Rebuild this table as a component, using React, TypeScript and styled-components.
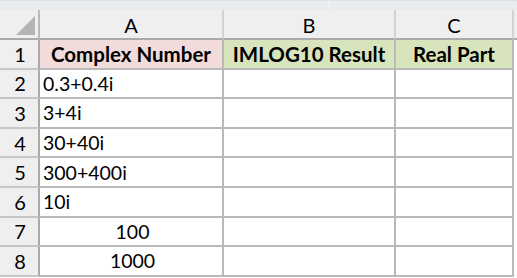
import { Fragment } from "react";
import styled, { createGlobalStyle } from "styled-components";

const GlobalStyle = createGlobalStyle`
  html, body {
    margin: 0;
    padding: 0;
    background: #ffffff;
  }
  body {
    font-family: "Lato", "Liberation Sans", sans-serif;
    color: #000000;
    overflow: hidden;
  }
`;

type Row = { value: string; center?: boolean };

const rows: Row[] = [
  { value: "0.3+0.4i" },
  { value: "3+4i" },
  { value: "30+40i" },
  { value: "300+400i" },
  { value: "10i" },
  { value: "100", center: true },
  { value: "1000", center: true },
];

const App = () => {
  return (
    <Page>
      <GlobalStyle />
      <TopStrip>
        <StripTab />
      </TopStrip>
      <Sheet>
        <Corner>
          <CornerTriangle />
        </Corner>
        <ColHead>A</ColHead>
        <ColHead>B</ColHead>
        <ColHead>C</ColHead>
        <ColHead $last />

        <RowHead>1</RowHead>
        <TitleCell $bg="#f2dcdb">Complex Number</TitleCell>
        <TitleCell $bg="#d8e4bc">IMLOG10 Result</TitleCell>
        <TitleCell $bg="#d8e4bc">Real Part</TitleCell>
        <Filler />

        {rows.map((r, i) => (
          <Fragment key={i}>
            <RowHead>{i + 2}</RowHead>
            <Cell $center={r.center}>{r.value}</Cell>
            <Cell />
            <Cell />
            <Filler />
          </Fragment>
        ))}
      </Sheet>
    </Page>
  );
};

const Page = styled.div`
  width: 517px;
  height: 278px;
  overflow: hidden;
  background: #ffffff;
`;

const TopStrip = styled.div`
  height: 10px;
  background: #e7ecef;
  border-top: 1px dotted #d4d9dc;
  box-sizing: border-box;
  display: flex;
  justify-content: flex-end;
`;

const StripTab = styled.div`
  width: 187px;
  height: 100%;
  border-left: 1px solid #f4f6f7;
`;

const Sheet = styled.div`
  display: grid;
  grid-template-columns: 40px 184px 172px 118px 1fr;
  grid-template-rows: 30px repeat(8, 29.6px);
`;

const Corner = styled.div`
  position: relative;
  background: #efefef;
  border-right: 2px solid #b9b9b9;
  border-bottom: 2px solid #a9a9a9;
  box-sizing: border-box;
`;

const CornerTriangle = styled.div`
  position: absolute;
  right: 3px;
  bottom: 3px;
  width: 0;
  height: 0;
  border-left: 19px solid transparent;
  border-bottom: 19px solid #b4b4b4;
`;

const ColHead = styled.div<{ $last?: boolean }>`
  background: #efefef;
  border-right: ${(p) => (p.$last ? "none" : "2px solid #d2d2d2")};
  border-bottom: 2px solid #a9a9a9;
  box-sizing: border-box;
  display: flex;
  align-items: center;
  justify-content: center;
  font-size: 20px;
  padding-top: 2px;
`;

const RowHead = styled.div`
  background: #efefef;
  border-right: 2px solid #a9a9a9;
  border-bottom: 2px solid #c6c6c6;
  box-sizing: border-box;
  display: flex;
  align-items: center;
  justify-content: center;
  font-size: 20px;
  padding-left: 2px;
`;

const Cell = styled.div<{ $center?: boolean }>`
  background: #ffffff;
  border-right: 2px solid #b9b9b9;
  border-bottom: 2px solid #b9b9b9;
  box-sizing: border-box;
  display: flex;
  align-items: center;
  justify-content: ${(p) => (p.$center ? "center" : "flex-start")};
  padding-left: 3px;
  font-size: 19.5px;
  white-space: nowrap;
`;

const TitleCell = styled(Cell)<{ $bg: string }>`
  background: ${(p) => p.$bg};
  justify-content: center;
  font-weight: bold;
  font-size: 20.5px;
  padding-left: 0;
`;

const Filler = styled.div`
  background: #ffffff;
`;

export default App;
